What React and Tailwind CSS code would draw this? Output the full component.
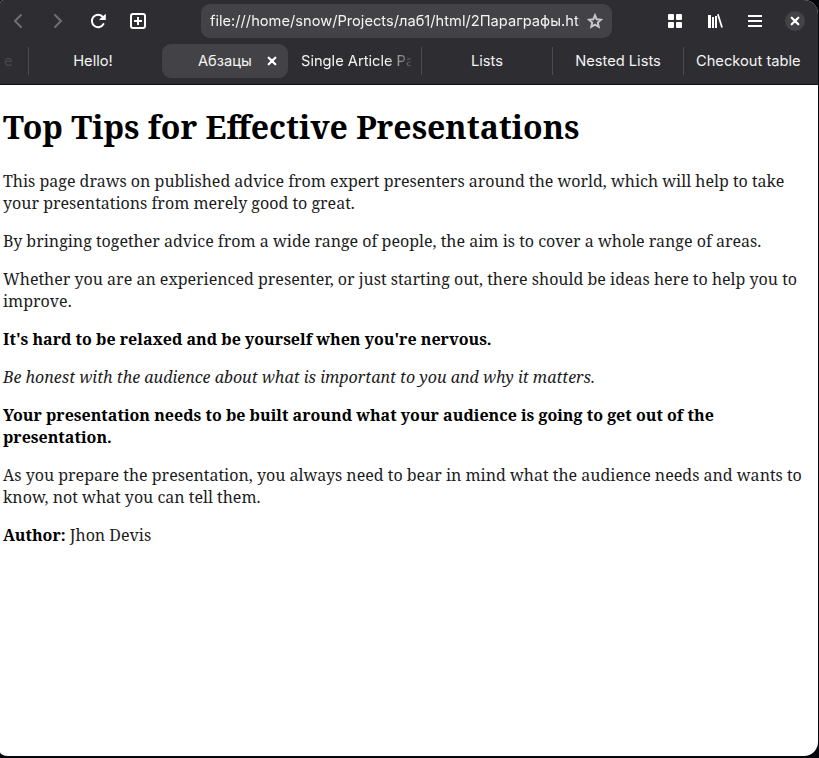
import React from "react";

const tabText = "whitespace-nowrap text-[14.67px] leading-5 text-[#f4f4f4]";

function Divider() {
  return <div className="h-7 w-px shrink-0 bg-[#4b4b4f]" />;
}

function Chevron({ right }) {
  return (
    <svg className="size-4" viewBox="0 0 16 16" fill="none" stroke="#6f6f73" strokeWidth="2" strokeLinecap="round">
      <path d={right ? "M5 2l6 6-6 6" : "M11 2L5 8l6 6"} />
    </svg>
  );
}

function Cross({ className }) {
  return (
    <svg className={className} viewBox="0 0 10 10" fill="none" stroke="#fff" strokeWidth="2.2" strokeLinecap="round">
      <path d="M1.7 1.7l6.6 6.6M8.3 1.7L1.7 8.3" />
    </svg>
  );
}

function Toolbar() {
  return (
    <div className="flex h-[42px] shrink-0 items-center">
      <div className="ml-[10px] flex w-[136px] items-center justify-between">
        <Chevron />
        <Chevron right />
        <svg className="size-4" viewBox="0 0 16 16" fill="none">
          <path d="M12.600 3.700A6.200 6.200 0 1 0 13.500 11" stroke="#fff" strokeWidth="2" strokeLinecap="round" />
          <path d="M15.800.700V7H9.500V6.200z" fill="#fff" />
        </svg>
        <svg className="size-4" viewBox="0 0 16 16" fill="none" stroke="#fff" strokeWidth="2">
          <rect x="1" y="1" width="14" height="14" rx="2" />
          <path d="M8 4v8M4 8h8" />
        </svg>
      </div>
      <div className="ml-[55px] flex h-[34px] w-[411px] shrink-0 items-center rounded-[9px] bg-[#434347]">
        <div className="ml-[9px] w-[370px] shrink-0 overflow-hidden whitespace-nowrap text-[14.67px] leading-5 text-[#f4f4f4] [mask-image:linear-gradient(to_right,black_367px,transparent_372px)]">
          file:///home/snow/Projects/лаб1/html/2Параграфы.html
        </div>
        <svg className="ml-[7px] size-4 shrink-0" viewBox="0 0 16 16" fill="none" stroke="#c8c8ca" strokeWidth="2">
          <path d="M8 2.300l1.700 4 4.300.4-3.200 2.900.9 4.200L8 11.600l-3.700 2.200.9-4.200L2 6.700l4.300-.4z" />
        </svg>
      </div>
      <svg className="ml-[56px] size-[14px]" viewBox="0 0 14 14" fill="#fff">
        <rect width="6" height="6" rx="1" />
        <rect x="8" width="6" height="6" rx="1" />
        <rect y="8" width="6" height="6" rx="1" />
        <rect x="8" y="8" width="6" height="6" rx="1" />
      </svg>
      <svg className="ml-[26px] h-[14px] w-[15px]" viewBox="0 0 15 14" fill="#fff">
        <path d="M0 1h3v13H0zM4 3h2v11H4zM7 2h2v12H7zM9 .500l1.700-.5L14.900 13.300l-1.700.5z" />
      </svg>
      <svg className="ml-[25px] h-3 w-[14px]" viewBox="0 0 14 12" fill="#fff">
        <path d="M0 0h14v2H0zM0 5h14v2H0zM0 10h14v2H0z" />
      </svg>
      <div className="ml-[23px] flex size-5 items-center justify-center rounded-full bg-[#434347]">
        <Cross className="size-[10px]" />
      </div>
    </div>
  );
}

function TabBar() {
  return (
    <div className="flex h-[42px] shrink-0 items-start pt-[2px]">
      <div className="flex h-[34px] w-full items-center">
        <div className="w-7 shrink-0 pl-1 text-[14.67px] leading-5 text-[#47474b]">e</div>
        <Divider />
        <div className={`w-[133px] shrink-0 pr-[5px] text-center ${tabText}`}>Hello!</div>
        <div className="flex h-[34px] w-[126px] shrink-0 items-center rounded-[9px] bg-[#434347]">
          <div className={`ml-9 w-[54px] ${tabText}`}>Абзацы</div>
          <Cross className="ml-[15px] size-[10px]" />
        </div>
        <div className="w-[133px] shrink-0 pl-[13px]">
          <div className={`w-[110px] overflow-hidden [mask-image:linear-gradient(to_right,black_84px,transparent_114px)] ${tabText}`}>Single Article Page</div>
        </div>
        <Divider />
        <div className={`w-[130px] shrink-0 text-center ${tabText}`}>Lists</div>
        <Divider />
        <div className={`w-[130px] shrink-0 text-center ${tabText}`}>Nested Lists</div>
        <Divider />
        <div className={`w-[130px] shrink-0 pl-3 ${tabText}`}>Checkout table</div>
      </div>
    </div>
  );
}

function Article() {
  return (
    <main className="flex flex-1 flex-col gap-4 pl-[3px] pr-2 pt-5 font-['Noto_Serif','Liberation_Serif',serif] text-base leading-[22px] text-[#1c1c1c]">
      <h1 className="mb-[5px] text-[32px] font-bold leading-[44px] text-black">Top Tips for Effective Presentations</h1>
      <p>
        This page draws on published advice from expert presenters around the world, which will help to take
        your presentations from merely good to great.
      </p>
      <p>By bringing together advice from a wide range of people, the aim is to cover a whole range of areas.</p>
      <p>
        Whether you are an experienced presenter, or just starting out, there should be ideas here to help you to
        improve.
      </p>
      <p className="font-bold text-black">It's hard to be relaxed and be yourself when you're nervous.</p>
      <p className="italic">Be honest with the audience about what is important to you and why it matters.</p>
      <p className="font-bold text-black">
        Your presentation needs to be built around what your audience is going to get out of the presentation.
      </p>
      <p>
        As you prepare the presentation, you always need to bear in mind what the audience needs and wants to
        know, not what you can tell them.
      </p>
      <p>
        <b className="font-bold text-black">Author:</b> Jhon Devis
      </p>
    </main>
  );
}

export default function App() {
  return (
    <div className="h-[758px] w-[819px] overflow-hidden bg-[#05070d] pb-[2px] pr-px font-['Inter','Noto_Sans',sans-serif]">
      <div className="flex h-[756px] w-[818px] flex-col overflow-hidden rounded-bl-[8px_4px] rounded-br-[14px] rounded-tl-[4px] rounded-tr-[14px] bg-white">
        <header className="flex h-[85px] shrink-0 flex-col border-b border-[#150f1c] bg-[#2e2e32]">
          <Toolbar />
          <TabBar />
        </header>
        <Article />
      </div>
    </div>
  );
}
